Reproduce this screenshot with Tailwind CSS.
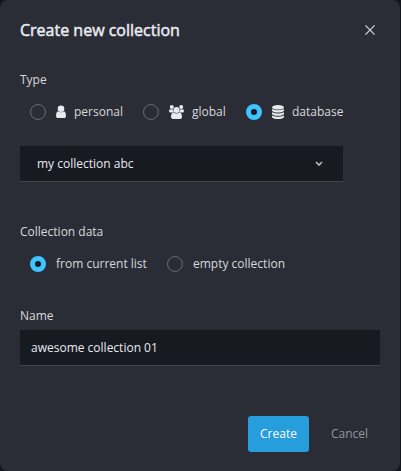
<!DOCTYPE html>
<html lang="en">
<head>
<meta charset="utf-8">
<title>Create new collection</title>
<script src="https://cdn.jsdelivr.net/npm/@tailwindcss/browser@4"></script>
</head>
<body class="h-[471px] w-[401px] overflow-hidden bg-[#14161d] font-['Open_Sans','Noto_Sans',sans-serif] text-[12px] leading-4 text-[#d8d9dd]">
<form class="flex h-[471px] w-[400px] flex-col rounded-lg bg-[#2a2d35] px-5">
  <header class="mt-[18px] flex h-6 items-center justify-between">
    <h1 class="text-[16px] leading-6 text-[#e9eaf0] [-webkit-text-stroke:0.5px_#e9eaf0]">Create new collection</h1>
    <button type="button" aria-label="Close" class="mr-[5px]">
      <svg class="block size-[10px]" viewBox="0 0 10 10" fill="none" stroke="#d8d9dd" stroke-width="1.2"><path d="M.4.4l9.2 9.2M9.6.4L.4 9.6"/></svg>
    </button>
  </header>
  <div class="mt-[30px]">Type</div>
  <div class="mt-[16px] flex h-4 items-center pl-[10px]">
    <span class="size-4 rounded-full border border-[#666a75]"></span>
    <svg class="-mt-px ml-[10px] h-[13px] w-[10px]" viewBox="0 0 10 13" fill="#e9eaf0"><circle cx="5" cy="3.8" r="3.3"/><path d="M1.8 6.2Q5 8.5 8.2 6.2Q10 7 10 10.5Q10 13 8.5 13H1.5Q0 13 0 10.5Q0 7 1.8 6.2Z"/></svg>
    <span class="ml-2 w-[69px]">personal</span>
    <span class="size-4 rounded-full border border-[#666a75]"></span>
    <svg class="-mt-px ml-[10px] h-[14px] w-[15px]" viewBox="0 0 15 14" fill="#e9eaf0"><circle cx="2.8" cy="2" r="2"/><circle cx="12.2" cy="2" r="2"/><circle cx="7.5" cy="5" r="3"/><path d="M1.2 4.2Q3 5 4 4.2Q4 6.2 5 7.2Q4 7 3.3 7.5H1.5Q0 7.5 0 6Q0 4.5 1.2 4.2ZM13.8 4.2Q12 5 11 4.2Q11 6.2 10 7.2Q11 7 11.7 7.5H13.5Q15 7.5 15 6Q15 4.5 13.8 4.2ZM4.3 7.6Q7.5 9.5 10.7 7.6Q13 8.5 13 12Q13 14 11 14H4Q2 14 2 12Q2 8.5 4.3 7.6Z"/></svg>
    <span class="ml-2 w-[54px]">global</span>
    <span class="size-4 rounded-full border-[5px] border-[#40c4ff] bg-[#171a21]"></span>
    <svg class="-mt-px ml-[10px] h-[14px] w-3" viewBox="0 0 12 14" fill="#e9eaf0"><ellipse cx="6" cy="2.3" rx="6" ry="2.3"/><path d="M0 4Q6 6.5 12 4V5.5Q11 7.5 6 7.5T0 5.5ZM0 7.3Q6 9.8 12 7.3V8.8Q11 10.8 6 10.8T0 8.8ZM0 10.5Q6 13 12 10.5V12Q11 14 6 14T0 12Z"/></svg>
    <span class="ml-2">database</span>
  </div>
  <div class="mt-[26px] flex h-9 w-[323px] items-center justify-between border-b border-[#41444b] bg-[#171a21] pr-5 pl-[17px] text-[#e9eaf0]">
    <span>my collection abc</span>
    <svg class="h-[6px] w-2" viewBox="0 0 8 6" fill="none" stroke="#b7b9c0" stroke-width="1.7"><path d="M1 1l3 3 3-3"/></svg>
  </div>
  <div class="mt-[42px]">Collection data</div>
  <div class="mt-[16px] flex h-4 items-center pl-[10px]">
    <span class="size-4 rounded-full border-[5px] border-[#40c4ff] bg-[#171a21]"></span>
    <span class="ml-[10px] w-[111px]">from current list</span>
    <span class="size-4 rounded-full border border-[#666a75]"></span>
    <span class="ml-[10px]">empty collection</span>
  </div>
  <label for="name" class="mt-[36px] block">Name</label>
  <input id="name" value="awesome collection 01" class="mt-[6px] block h-9 w-full border-b border-[#41444b] bg-[#171a21] px-[11px] text-[#e9eaf0] outline-none">
  <footer class="mt-[50px] flex justify-end">
    <button type="button" class="h-9 w-[61px] rounded-[3px] bg-[#269ddd] text-white">Create</button>
    <button type="button" class="h-9 w-[81px] -mr-[10px] text-[#92959e]">Cancel</button>
  </footer>
</form>
</body>
</html>
